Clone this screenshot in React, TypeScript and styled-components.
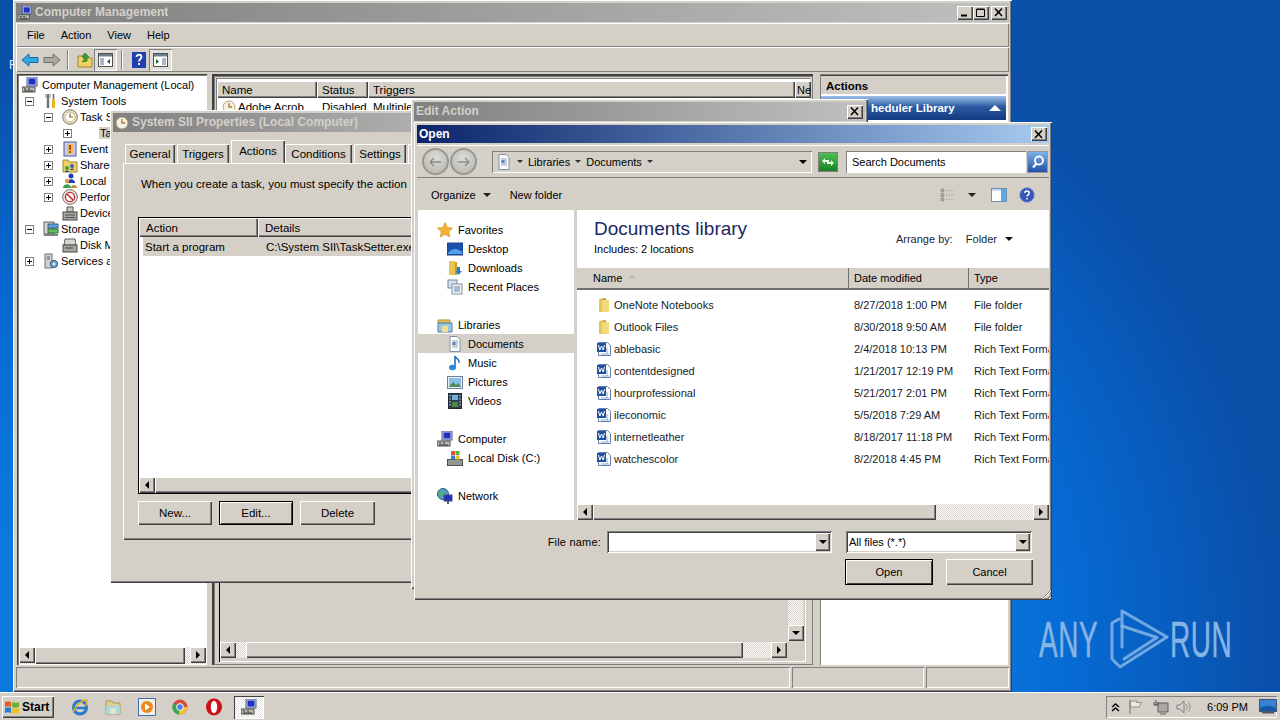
import React from "react";
import styled, { createGlobalStyle, css } from "styled-components";

const GlobalStyle = createGlobalStyle`
  html, body { margin: 0; padding: 0; width: 1280px; height: 720px; overflow: hidden; }
  * { box-sizing: border-box; }
  body { font-family: "Liberation Sans", Arial, sans-serif; font-size: 11.5px; color: #000; }
`;

const raised = css`
  background: #d4d0c8;
  box-shadow: inset 1px 1px 0 #fff, inset -1px -1px 0 #404040, inset -2px -2px 0 #808080;
`;
const sunken = css`
  box-shadow: inset 1px 1px 0 #808080, inset -1px -1px 0 #fff, inset 2px 2px 0 #404040, inset -2px -2px 0 #d4d0c8;
`;
const hatched = css`
  background: repeating-conic-gradient(#d4d0c8 0 25%, #fff 0 50%) 0 0 / 2px 2px;
`;

/* ---------- drawings ---------- */

const Svg = styled.svg`
  flex: none;
  display: block;
`;

type IconProps = { size?: number };

const icon = (paths: React.ReactNode) =>
  function Icon({ size = 16 }: IconProps) {
    return (
      <Svg width={size} height={size} viewBox="0 0 16 16">
        {paths}
      </Svg>
    );
  };

const ComputerIcon = icon(
  <>
    <rect x="5" y="0" width="10" height="9" fill="#c8d0e8" stroke="#4a5a9a" />
    <rect x="6.5" y="1.5" width="7" height="6" fill="#2030c0" />
    <rect x="0" y="10" width="13" height="5" fill="#b8b8b0" stroke="#505050" />
    <path d="M2 12h2M6 12h2M2 14h9" stroke="#303030" />
  </>
);
const ToolsIcon = icon(
  <>
    <path d="M5 1v14" stroke="#707070" strokeWidth="2.4" />
    <path d="M2.8 1v3l2.2 1.6L7.2 4V1" fill="none" stroke="#909090" />
    <path d="M10.5 6v9" stroke="#e8b820" strokeWidth="3" />
    <path d="M10.5 1v5" stroke="#707070" strokeWidth="1.6" />
  </>
);
const ClockIcon = icon(
  <>
    <circle cx="8" cy="8" r="7.3" fill="#e8e4d8" stroke="#807860" />
    <circle cx="8" cy="8" r="5" fill="#fff" stroke="#c8b878" />
    <path d="M8 4.5V8h3" fill="none" stroke="#806030" strokeWidth="1.2" />
  </>
);
const EventIcon = icon(
  <>
    <rect x="2" y="1" width="12" height="14" fill="#c8cce8" stroke="#505a90" />
    <rect x="5" y="3" width="6" height="10" fill="#e8c060" />
    <path d="M8 4v5" stroke="#c02020" strokeWidth="1.6" />
    <path d="M8 10v2" stroke="#c02020" strokeWidth="1.6" />
  </>
);
const ShareIcon = icon(
  <>
    <path d="M1 3h5l1 2h8v10H1z" fill="#f0d060" stroke="#a08830" />
    <circle cx="5" cy="11" r="2" fill="#40a040" />
    <circle cx="10" cy="9" r="2" fill="#3060c0" />
    <path d="M3 15c0-2 4-2 4 0zM8 13c0-2 4-2 4 0z" fill="#305090" />
  </>
);
const UsersIcon = icon(
  <>
    <circle cx="9" cy="3" r="2.5" fill="#2040b0" />
    <path d="M5 10c0-5 8-5 8 0z" fill="#2040b0" />
    <circle cx="5" cy="8" r="2.2" fill="#e0a040" />
    <path d="M1 15c0-5 8-5 8 0z" fill="#40a050" />
    <path d="M9 15c0-4 6-4 6 0z" fill="#c09030" />
  </>
);
const PerfIcon = icon(
  <>
    <circle cx="8" cy="8" r="7.3" fill="#f4f0e8" stroke="#706860" />
    <circle cx="8" cy="8" r="4.6" fill="#fff" stroke="#c03030" strokeWidth="1.4" />
    <path d="M5 5l6 6" stroke="#c03030" strokeWidth="1.6" />
  </>
);
const DeviceIcon = icon(
  <>
    <path d="M5 2h6v5H5z" fill="#c8c8c0" stroke="#505050" />
    <rect x="1" y="7" width="14" height="8" fill="#a8a8a0" stroke="#484848" />
    <path d="M3 10h10M3 12.500h10" stroke="#505050" />
  </>
);
const StorageIcon = icon(
  <>
    <rect x="1" y="1" width="10" height="12" fill="#d8d8d0" stroke="#606060" />
    <rect x="5" y="3" width="10" height="4" fill="#60a0d8" stroke="#306090" />
    <rect x="5" y="8" width="10" height="4" fill="#60c060" stroke="#307030" />
    <path d="M1 13h14v2H1z" fill="#808080" />
  </>
);
const DiskIcon = icon(
  <>
    <path d="M3 2h10l1 6H2z" fill="#d8d8d0" stroke="#606060" />
    <rect x="1" y="8" width="14" height="7" fill="#a8a8a0" stroke="#484848" />
    <path d="M3 11h8" stroke="#404040" />
  </>
);
const ServicesIcon = icon(
  <>
    <rect x="2" y="1" width="7" height="14" fill="#d0d0d0" stroke="#707070" />
    <path d="M4 4h3M4 6h3" stroke="#606060" />
    <circle cx="11" cy="11" r="3.6" fill="#70a8d8" stroke="#305880" />
    <circle cx="11" cy="11" r="1.2" fill="#fff" />
  </>
);
const SmallClock = icon(
  <>
    <circle cx="8" cy="8" r="6.800" fill="#f2f0e8" stroke="#a89a70" />
    <path d="M8 3.500V8h3.500" fill="none" stroke="#c07820" strokeWidth="1.500" />
  </>
);
const FolderIcon = icon(
  <>
    <path d="M3 2l7-1v14l-7 0z" fill="#c8a030" />
    <path d="M5 3h8v12H5z" fill="#f2da78" />
    <path d="M3 2h3v13H3z" fill="#e8c650" />
  </>
);
const WordDocIcon = icon(
  <>
    <path d="M2.500 1.500h9l3 3v10h-12z" fill="#fff" stroke="#6080b0" />
    <rect x="1" y="2" width="9" height="9" fill="#2050a0" />
    <path d="M2.500 4l1.300 5 1.700-4 1.700 4 1.300-5" fill="none" stroke="#fff" />
    <path d="M11 7v6M5 13h8" stroke="#90a8c8" />
  </>
);
const StarIcon = icon(
  <path d="M8 .5l2.300 5 5.200.6-3.800 3.600 1 5.300L8 12.300 3.300 15l1-5.300L.5 6.100l5.200-.6z" fill="#f4b030" stroke="#d08818" strokeWidth=".6" />
);
const DesktopIcon = icon(
  <>
    <rect x="0" y="2" width="16" height="12" fill="#1c50b0" stroke="#204080" />
    <path d="M1 12c4-5 9-5 14-1v2H1z" fill="#50a0e8" />
  </>
);
const DownloadsIcon = icon(
  <>
    <path d="M2 1h6v14H2z" fill="#e8c650" />
    <path d="M8 2h2v13H8z" fill="#c8a030" />
    <path d="M10 7h3v4h2l-3.500 4L8 11h2z" fill="#2080d8" />
  </>
);
const RecentIcon = icon(
  <>
    <rect x="1" y="1" width="9" height="8" fill="#d8e0e8" stroke="#7888a0" />
    <rect x="5" y="5" width="10" height="10" fill="#f0f0f0" stroke="#8090a0" />
    <path d="M7 8h6M7 10h6M7 12h6" stroke="#5888b8" />
  </>
);
const LibrariesIcon = icon(
  <>
    <path d="M1 3h12v3H1z" fill="#e8c860" stroke="#b09030" />
    <path d="M1 6h14v9H1z" fill="#98c8e0" stroke="#5080a0" />
    <rect x="5" y="9" width="6" height="6" fill="#f0e090" />
  </>
);
const DocPageIcon = icon(
  <>
    <path d="M3 .5h7l3 3v12H3z" fill="#fff" stroke="#8090a8" />
    <path d="M5 5h6M5 7h6M5 9h6M5 11h6" stroke="#90a0b8" />
    <rect x="5.500" y="6" width="3" height="3" fill="#6080c0" />
  </>
);
const MusicIcon = icon(
  <>
    <path d="M8 1v11" stroke="#2070c0" strokeWidth="1.600" />
    <path d="M8 1c1 3 5 3 4 7" fill="none" stroke="#2070c0" strokeWidth="1.400" />
    <ellipse cx="5.500" cy="12.500" rx="3.500" ry="2.800" fill="#2888d8" />
  </>
);
const PicturesIcon = icon(
  <>
    <rect x=".5" y="2.500" width="15" height="12" fill="#e8f0f8" stroke="#708098" />
    <rect x="2" y="4" width="12" height="9" fill="#88c0e8" />
    <path d="M2 13l4-5 3 3 2-2 3 4z" fill="#508850" />
  </>
);
const VideosIcon = icon(
  <>
    <rect x="1.500" y=".5" width="13" height="15" fill="#304050" stroke="#202830" />
    <rect x="5" y="2" width="6" height="5" fill="#70b0d8" />
    <rect x="5" y="9" width="6" height="5" fill="#508848" />
    <path d="M3 2v12M13 2v12" stroke="#d0d8e0" strokeDasharray="1.500 1.500" />
  </>
);
const LocalDiskIcon = icon(
  <>
    <rect x=".5" y="9.500" width="15" height="6" fill="#909890" stroke="#505050" />
    <rect x="4" y="1" width="4" height="4" fill="#e05030" />
    <rect x="8.500" y="1" width="4" height="4" fill="#60b040" />
    <rect x="4" y="5.500" width="4" height="4" fill="#3080d8" />
    <rect x="8.500" y="5.500" width="4" height="4" fill="#f0c030" />
  </>
);
const NetworkIcon = icon(
  <>
    <circle cx="6" cy="6" r="5.500" fill="#50a0c0" stroke="#306080" />
    <path d="M3 3c2 0 3 1 3 3S4 8 3 7zM8 2c1 2 2 2 2 4" fill="#60b060" />
    <rect x="7" y="7" width="8" height="6" fill="#2030c0" stroke="#404880" />
    <path d="M11 13v3" stroke="#505880" strokeWidth="2" />
  </>
);
const ArrowIcon = ({ color, edge, flip }: { color: string; edge: string; flip?: boolean }) => (
  <Svg width="18" height="16" viewBox="0 0 18 16" transform={flip ? "scale(-1 1)" : undefined}>
    <path d="M1 8l7-6v3.500h9v5H8V14z" fill={color} stroke={edge} />
  </Svg>
);
const UpFolderIcon = icon(
  <>
    <path d="M1 4h5l1 2h8v9H1z" fill="#f0d060" stroke="#a08830" />
    <path d="M8 1l4 4h-2v4l-5 1 2-2V5H5z" fill="#40a030" stroke="#206018" strokeWidth=".6" />
  </>
);
const PaneIcon = ({ right }: { right?: boolean }) => (
  <Svg width="15" height="14" viewBox="0 0 15 14">
    <rect x=".5" y=".5" width="14" height="13" fill="#fff" stroke="#505050" />
    <rect x="1" y="1" width="13" height="2.500" fill="#708090" />
    <rect x={right ? 9 : 2} y="5" width="4" height="7" fill="#a8b8c8" />
    <path d={right ? "M3 6l3 2.500L3 11z" : "M12 6L9 8.500l3 2.500z"} fill="#206040" />
  </Svg>
);
const HelpSquare = () => (
  <Svg width="14" height="16" viewBox="0 0 14 16">
    <rect width="14" height="16" fill="#2040b0" />
    <path d="M4.500 5c0-3 5-3 5 0 0 2-2.500 2-2.500 4.500M7 11v2" fill="none" stroke="#fff" strokeWidth="1.800" />
  </Svg>
);
const WinFlag = () => (
  <Svg width="17" height="16" viewBox="0 0 17 16">
    <path d="M1 3c2-1 4-1 6 0v5C5 7 3 7 1 8z" fill="#e85a28" />
    <path d="M8 3c2 1 4 1 7 0v5c-3 1-5 1-7 0z" fill="#70b030" />
    <path d="M1 9c2-1 4-1 6 0v5c-2-1-4-1-6 0z" fill="#2080d8" />
    <path d="M8 9c2 1 4 1 7 0v5c-3 1-5 1-7 0z" fill="#f0c028" />
  </Svg>
);
const IEIcon = () => (
  <Svg width="18" height="18" viewBox="0 0 18 18">
    <circle cx="9" cy="9.500" r="6.500" fill="none" stroke="#2878d0" strokeWidth="3" />
    <path d="M3 10h12" stroke="#2878d0" strokeWidth="2.400" />
    <path d="M2 15C4 8 10 2 16 2c1 3-2 6-3 6" fill="none" stroke="#e8b020" strokeWidth="1.400" />
  </Svg>
);
const ExplorerIcon = () => (
  <Svg width="18" height="18" viewBox="0 0 18 18">
    <path d="M2 3h6l1 2h7v11H2z" fill="#d8cf90" stroke="#a89858" />
    <path d="M2 8h14v8H2z" fill="#a8d8e8" />
    <rect x="6" y="10" width="6" height="6" fill="#e0e8c0" />
  </Svg>
);
const MediaIcon = () => (
  <Svg width="18" height="18" viewBox="0 0 18 18">
    <rect x=".5" y=".5" width="17" height="17" fill="#f0f0e8" stroke="#4070b0" />
    <circle cx="9" cy="9" r="6" fill="#e88820" />
    <path d="M7 5.500l5 3.500-5 3.500z" fill="#fff" />
  </Svg>
);
const ChromeIcon = () => (
  <Svg width="16" height="16" viewBox="0 0 16 16">
    <circle cx="8" cy="8" r="7.500" fill="#d94a38" />
    <path d="M8 8L1.500 4A7.500 7.500 0 0 0 7 15.500z" fill="#3aa757" />
    <path d="M8 8h7.300A7.500 7.500 0 0 1 7 15.500z" fill="#f4c430" />
    <circle cx="8" cy="8" r="3.400" fill="#4a80e8" stroke="#fff" />
  </Svg>
);
const OperaIcon = () => (
  <Svg width="18" height="18" viewBox="0 0 18 18">
    <ellipse cx="9" cy="9" rx="8" ry="8.500" fill="#cc0f16" />
    <ellipse cx="9" cy="9" rx="3.200" ry="6.200" fill="#fff" />
  </Svg>
);
const ChevronTray = () => (
  <Svg width="9" height="9" viewBox="0 0 9 9">
    <path d="M1 4l3.500-3L8 4M1 8l3.500-3L8 8" fill="none" stroke="#000" strokeWidth="1.400" />
  </Svg>
);
const FlagTray = () => (
  <Svg width="16" height="16" viewBox="0 0 16 16">
    <path d="M2 1v14" stroke="#707070" />
    <path d="M2.500 2h7l-1 1.500 5 0L11 8H2.500z" fill="#e8e8e0" stroke="#808080" strokeWidth=".8" />
  </Svg>
);
const NetTray = () => (
  <Svg width="16" height="16" viewBox="0 0 16 16">
    <rect x="5" y="4" width="10" height="9" fill="#a8a8a0" stroke="#606060" />
    <path d="M3 1v6M1 3v3h4V3" fill="none" stroke="#505050" />
    <path d="M7 15h6" stroke="#606060" />
  </Svg>
);
const SpeakerTray = () => (
  <Svg width="16" height="16" viewBox="0 0 16 16">
    <path d="M1 6h3l4-4v12l-4-4H1z" fill="#d0d0d0" stroke="#808080" />
    <path d="M10 5c1.500 2 1.500 4 0 6M12.500 3.500c2 3 2 6 0 9" fill="none" stroke="#909090" />
  </Svg>
);
const ShowDesktopIcon = () => (
  <Svg width="18" height="16" viewBox="0 0 18 16">
    <rect x=".5" y=".5" width="17" height="12" fill="#3880d0" stroke="#405878" />
    <path d="M1 9c5-3 11-3 16 0v3H1z" fill="#1858a8" />
    <path d="M3 13.500h12" stroke="#505868" strokeWidth="2" />
  </Svg>
);
const RefreshIcon = () => (
  <Svg width="14" height="14" viewBox="0 0 14 14">
    <path d="M1 6l3-3v2h4v2H4v2zM13 8l-3 3V9H6V7h4V5z" fill="#e8f8e8" />
  </Svg>
);
const SearchIcon = () => (
  <Svg width="14" height="14" viewBox="0 0 14 14">
    <circle cx="8" cy="5.500" r="4" fill="none" stroke="#fff" strokeWidth="1.800" />
    <path d="M5.500 8.500L2 12.500" stroke="#fff" strokeWidth="2.200" />
  </Svg>
);
const ViewsIcon = () => (
  <Svg width="14" height="14" viewBox="0 0 14 14">
    <path d="M1 1h3v3H1zM1 5.500h3v3H1zM1 10h3v3H1z" fill="#a8a8a0" stroke="#808078" strokeWidth=".5" />
    <path d="M6 2.500h8M6 7h8M6 11.500h8" stroke="#a8a8a0" strokeDasharray="1.500 1" />
  </Svg>
);
const PreviewIcon = () => (
  <Svg width="16" height="15" viewBox="0 0 16 15">
    <rect x=".5" y=".5" width="15" height="13" fill="#fff" stroke="#7090b0" />
    <rect x="10" y="1" width="5" height="12" fill="#60a8e0" />
    <rect x="1" y="1" width="9" height="2" fill="#c8d8e8" />
  </Svg>
);
const HelpRound = () => (
  <Svg width="16" height="16" viewBox="0 0 16 16">
    <circle cx="8" cy="8" r="7.500" fill="#3858b8" stroke="#a0b0d8" />
    <path d="M5.800 6c0-2.700 4.400-2.700 4.400 0 0 1.800-2.200 1.800-2.200 3.500M8 11v1.500" fill="none" stroke="#fff" strokeWidth="1.500" />
  </Svg>
);
const WatermarkLogo = () => (
  <Svg width="60" height="62" viewBox="0 0 60 62">
    <g fill="none" stroke="#86b4e4" strokeOpacity=".85" strokeWidth="3" strokeLinejoin="round" strokeLinecap="round">
      <path d="M9 10L2 14v36l8 8 47-30L12 2v36" />
      <path d="M12 17l35 11.500L14 50" />
    </g>
  </Svg>
);

/* ---------- desktop ---------- */

const Desktop = styled.div`
  position: relative;
  width: 1280px;
  height: 720px;
  overflow: hidden;
  background:
    radial-gradient(ellipse 800px 720px at 480px 640px, #1aa8f5 0%, #0b7fe0 55%, #0669d2 75%, #0a4fa8 100%),
    #0a4fa8;
`;

const ClippedLabel = styled.span`
  position: absolute;
  left: 9px;
  top: 58px;
  color: #dfeaf8;
  font-size: 12px;
`;

const WatermarkBox = styled.div`
  position: absolute;
  left: 1039px;
  top: 609px;
  display: flex;
  align-items: center;
  color: #86b4e4;
`;

const WatermarkWord = styled.span<{ $w: number }>`
  display: block;
  width: ${(p) => p.$w}px;
  font-size: 50px;
  line-height: 62px;
  transform: scaleX(0.56);
  transform-origin: left center;
  white-space: nowrap;
  letter-spacing: 1px;
  -webkit-text-stroke: 0.5px #86b4e4;
`;

/* ---------- windows ---------- */

const Win = styled.div<{ $x: number; $y: number; $w: number; $h: number; $z: number; $font?: number }>`
  position: absolute;
  left: ${(p) => p.$x}px;
  top: ${(p) => p.$y}px;
  width: ${(p) => p.$w}px;
  height: ${(p) => p.$h}px;
  z-index: ${(p) => p.$z};
  display: flex;
  flex-direction: column;
  overflow: hidden;
  padding: 3px;
  ${(p) => p.$font && `font-size: ${p.$font}px;`}
  ${raised}
`;

const TitleBar = styled.div<{ $active?: boolean; $h?: number }>`
  flex: none;
  height: ${(p) => p.$h ?? 19}px;
  display: flex;
  align-items: center;
  gap: 3px;
  padding: 0 2px;
  font-weight: 700;
  font-size: 12px;
  color: ${(p) => (p.$active ? "#fff" : "#d4d0c8")};
  background: ${(p) =>
    p.$active ? "linear-gradient(90deg, #0a246a 0%, #a6caf0 100%)" : "linear-gradient(90deg, #808080 0%, #c0c0c0 100%)"};
`;

const TitleText = styled.span`
  flex: 1;
  white-space: nowrap;
  overflow: hidden;
  line-height: 15px;
`;

const CaptionButtons = styled.div`
  display: flex;
  flex: none;
`;

const CaptionButton = styled.div<{ $gap?: number }>`
  ${raised}
  width: 16px;
  height: 14px;
  margin-left: ${(p) => p.$gap ?? 0}px;
  display: flex;
  align-items: center;
  justify-content: center;
`;

const CaptionGlyph = ({ kind }: { kind: "min" | "max" | "close" }) => (
  <Svg width="10" height="9" viewBox="0 0 10 9">
    {kind === "min" && <path d="M1 7.500h6" stroke="#000" strokeWidth="2" />}
    {kind === "max" && <path d="M.5 1.500h8v7h-8zM.5 1h8" fill="none" stroke="#000" />}
    {kind === "close" && <path d="M1 .5l7 7.500M8 .5L1 8" stroke="#000" strokeWidth="1.500" />}
  </Svg>
);

/* ---------- main window ---------- */

const MenuBar = styled.div`
  flex: none;
  height: 24px;
  margin-top: 1px;
  display: flex;
  align-items: center;
  padding-left: 11px;
  gap: 16px;
  font-size: 11px;
  box-shadow: inset 1px 1px 0 #fff, inset -1px -1px 0 #808080;
`;

const ToolBar = styled.div`
  flex: none;
  height: 25px;
  display: flex;
  align-items: center;
  padding-left: 3px;
  box-shadow: inset 1px 1px 0 #fff, inset -1px -1px 0 #808080;
`;

const ToolItem = styled.div<{ $pressed?: boolean; $w?: number }>`
  width: ${(p) => p.$w ?? 22}px;
  height: 22px;
  display: flex;
  align-items: center;
  justify-content: center;
  ${(p) =>
    p.$pressed &&
    css`
      box-shadow: inset 1px 1px 0 #808080, inset -1px -1px 0 #fff;
      background: repeating-conic-gradient(#d4d0c8 0 25%, #f0eee8 0 50%) 0 0 / 2px 2px;
    `}
`;

const ToolSep = styled.div`
  width: 2px;
  height: 20px;
  margin: 0 6px 0 4px;
  border-left: 1px solid #808080;
  border-right: 1px solid #fff;
`;

const Panes = styled.div`
  flex: 1;
  min-height: 0;
  margin-top: 2px;
  display: flex;
`;

const TreePane = styled.div`
  flex: none;
  width: 190px;
  margin-left: 1px;
  display: flex;
  flex-direction: column;
  background: #fff;
  font-size: 11px;
  box-shadow: inset 1px 1px 0 #404040, inset 2px 2px 0 #808080;
  padding: 2px 1px 1px 2px;
`;

const TreeList = styled.div`
  flex: 1;
  padding-top: 1px;
`;

const TreeRow = styled.div<{ $level: number; $root?: boolean }>`
  height: 16px;
  display: flex;
  align-items: center;
  gap: ${(p) => (p.$root ? 4 : 2)}px;
  padding-left: ${(p) => p.$level * 19 + 3}px;
  white-space: nowrap;
`;

const Expander = styled.span<{ $plus?: boolean }>`
  flex: none;
  width: 9px;
  height: 9px;
  margin: 0 7px 0 3px;
  border: 1px solid #808080;
  background: ${(p) =>
    p.$plus
      ? "linear-gradient(#000, #000) center / 5px 1px no-repeat, linear-gradient(#000, #000) center / 1px 5px no-repeat, #fff"
      : "linear-gradient(#000, #000) center / 5px 1px no-repeat, #fff"};
`;

const ExpanderGap = styled.span`
  flex: none;
  width: 19px;
`;

const BlankIcon = styled.span`
  flex: none;
  width: 16px;
`;

const TreeLabel = styled.span<{ $selected?: boolean }>`
  padding: 0 ${(p) => (p.$selected ? 1 : 0)}px;
  background: ${(p) => (p.$selected ? "#d4d0c8" : "transparent")};
`;

const Splitter = styled.div<{ $w: number }>`
  flex: none;
  width: ${(p) => p.$w}px;
`;

const CenterPane = styled.div`
  flex: 1;
  min-width: 0;
  display: flex;
  flex-direction: column;
  padding: 4px 3px 3px 4px;
  box-shadow: inset 2px 2px 0 #404040, inset 3px 3px 0 #808080, inset -1px -1px 0 #808080;
`;

const TaskList = styled.div`
  flex: none;
  height: 230px;
  background: #fff;
  box-shadow: inset 1px 1px 0 #808080;
  padding: 3px 0 0 1px;
`;

const ListHead = styled.div`
  display: flex;
  height: 17px;
`;

const HeadCell = styled.div<{ $w?: number }>`
  ${raised}
  ${(p) => (p.$w ? `flex: none; width: ${p.$w}px;` : "flex: 1;")}
  display: flex;
  align-items: center;
  padding-left: 5px;
  white-space: nowrap;
`;

const NarrowHead = styled(HeadCell)`
  padding-left: 2px;
  font-size: 11px;
`;

const TaskRow = styled.div`
  display: flex;
  align-items: center;
  height: 17px;
`;

const TaskCell = styled.div<{ $w: number }>`
  flex: none;
  width: ${(p) => p.$w}px;
  display: flex;
  align-items: center;
  gap: 2px;
  padding-left: 5px;
  white-space: nowrap;
`;

const DetailPane = styled.div`
  flex: 1;
  min-height: 0;
  margin: 6px 4px 0 3px;
  display: flex;
  flex-direction: column;
  box-shadow: inset 1px 1px 0 #000, inset -1px -1px 0 #fff;
  padding: 1px 3px 4px 1px;
`;

const DetailBody = styled.div`
  flex: 1;
  min-height: 0;
  display: flex;
  justify-content: flex-end;
  margin-bottom: 1px;
`;

const VScroll = styled.div`
  flex: none;
  width: 15px;
  display: flex;
  flex-direction: column;
  justify-content: flex-end;
  ${hatched}
`;

const ActionsPane = styled.div`
  flex: none;
  width: 188px;
  margin-right: 1px;
  display: flex;
  flex-direction: column;
  background: #fff;
  padding: 2px 2px 0 1px;
  box-shadow: inset 1px 1px 0 #808080, inset 0 2px 0 #404040;
`;

const ActionsHead = styled.div`
  flex: none;
  height: 19px;
  display: flex;
  align-items: center;
  padding-left: 5px;
  font-weight: 700;
  background: #d4d0c8;
  box-shadow: inset 0 -1px 0 #fff;
`;

const ActionsBand = styled.div`
  flex: none;
  height: 24px;
  margin-top: 1px;
  display: flex;
  align-items: center;
  justify-content: space-between;
  padding: 0 5px 0 50px;
  color: #fff;
  font-weight: 700;
  background: linear-gradient(180deg, #9dc0e8 0%, #2a5aa0 45%, #123a80 100%);
`;

const UpTriangle = styled.span`
  width: 0;
  height: 0;
  border-left: 6px solid transparent;
  border-right: 6px solid transparent;
  border-bottom: 6px solid #fff;
`;

const StatusBar = styled.div`
  flex: none;
  height: 21px;
  margin: 2px 0 1px;
  display: flex;
  gap: 2px;
`;

const StatusCell = styled.div<{ $w?: number }>`
  ${(p) => (p.$w ? `flex: none; width: ${p.$w}px;` : "flex: 1;")}
  box-shadow: inset 1px 1px 0 #808080, inset -1px -1px 0 #fff;
`;

/* ---------- scroll bars ---------- */

const ScrollRow = styled.div<{ $h?: number; $mr?: number }>`
  flex: none;
  height: ${(p) => p.$h ?? 16}px;
  margin-right: ${(p) => p.$mr ?? 0}px;
  display: flex;
  ${hatched}
`;

const ArrowBtn = styled.div`
  ${raised}
  flex: none;
  width: 16px;
  height: 16px;
  display: flex;
  align-items: center;
  justify-content: center;
`;

const Tri = styled.span<{ $dir: "left" | "right" | "down" }>`
  width: 0;
  height: 0;
  ${(p) =>
    p.$dir === "left" &&
    "border-top:4px solid transparent;border-bottom:4px solid transparent;border-right:4px solid #000;"}
  ${(p) =>
    p.$dir === "right" &&
    "border-top:4px solid transparent;border-bottom:4px solid transparent;border-left:4px solid #000;"}
  ${(p) =>
    p.$dir === "down" &&
    "border-left:4px solid transparent;border-right:4px solid transparent;border-top:4px solid #000;"}
`;

const Thumb = styled.div<{ $w?: number; $ml?: number }>`
  ${raised}
  ${(p) => (p.$w ? `flex: none; width: ${p.$w}px;` : "flex: 1;")}
  margin-left: ${(p) => p.$ml ?? 0}px;
`;

const Spacer = styled.div<{ $w?: number }>`
  ${(p) => (p.$w ? `flex: none; width: ${p.$w}px;` : "flex: 1;")}
`;

/* ---------- properties window ---------- */

const TabStrip = styled.div`
  flex: none;
  height: 25px;
  margin-top: 6px;
  padding-left: 12px;
  display: flex;
  align-items: flex-end;
  position: relative;
  z-index: 1;
`;

const Tab = styled.div<{ $active?: boolean; $w: number }>`
  flex: none;
  width: ${(p) => p.$w}px;
  height: ${(p) => (p.$active ? 23 : 19)}px;
  margin-right: ${(p) => (p.$active ? 0 : 2)}px;
  display: flex;
  align-items: center;
  justify-content: center;
  padding-bottom: ${(p) => (p.$active ? 2 : 0)}px;
  background: #d4d0c8;
  box-shadow: inset 1px 1px 0 #fff, inset -1px 0 0 #404040, inset -2px 0 0 #808080;
  white-space: nowrap;
`;

const TabPanel = styled.div`
  flex: none;
  width: 400px;
  height: 377px;
  margin-left: 10px;
  padding: 15px 0 0 15px;
  display: flex;
  flex-direction: column;
  box-shadow: inset 1px 1px 0 #fff, inset -1px -1px 0 #404040, inset 0 -2px 0 #808080;
`;

const PanelText = styled.div`
  height: 16px;
  padding-left: 3px;
  white-space: nowrap;
`;

const ActionTable = styled.div`
  flex: none;
  width: 380px;
  height: 277px;
  margin-top: 23px;
  display: flex;
  flex-direction: column;
  background: #fff;
  border: 1px solid #000;
  border-right: none;
`;

const ActionHead = styled.div`
  flex: none;
  height: 19px;
  display: flex;
`;

const ActionHeadCell = styled.div<{ $w: number }>`
  ${raised}
  flex: none;
  width: ${(p) => p.$w}px;
  display: flex;
  align-items: center;
  padding-left: 7px;
`;

const ActionRows = styled.div`
  flex: 1;
  padding: 0 0 0 4px;
`;

const ActionRow = styled.div`
  height: 19px;
  display: flex;
  align-items: center;
  background: #d4d0c8;
  white-space: nowrap;
`;

const ActionCell = styled.div<{ $w: number }>`
  flex: none;
  width: ${(p) => p.$w}px;
  padding-left: 2px;
`;

const PropButtons = styled.div`
  flex: none;
  margin-top: 7px;
  display: flex;
  gap: 7px;
`;

const Button = styled.div<{ $w: number; $h: number; $default?: boolean }>`
  ${raised}
  flex: none;
  width: ${(p) => p.$w}px;
  height: ${(p) => p.$h}px;
  display: flex;
  align-items: center;
  justify-content: center;
  ${(p) =>
    p.$default &&
    css`
      box-shadow: inset 0 0 0 1px #000, inset 2px 2px 0 #fff, inset -2px -2px 0 #404040;
    `}
`;

/* ---------- open dialog ---------- */

const NavBar = styled.div`
  flex: none;
  height: 33px;
  margin-top: 2px;
  display: flex;
  align-items: center;
  padding-left: 5px;
  box-shadow: inset 0 -1px 0 #808080, inset 0 1px 0 #fff;
`;

const RoundBtn = styled.div`
  flex: none;
  width: 27px;
  height: 27px;
  margin-right: 1px;
  border-radius: 50%;
  border: 2px solid #989890;
  background: radial-gradient(circle at 50% 35%, #dcdcd8, #b4b2ac);
  display: flex;
  align-items: center;
  justify-content: center;
`;

const RoundArrow = ({ flip }: { flip?: boolean }) => (
  <Svg width="13" height="10" viewBox="0 0 13 10" transform={flip ? "scale(-1 1)" : undefined}>
    <path d="M1 5l4-4M1 5l4 4M1 5h11" stroke="#8e8e88" strokeWidth="1.500" fill="none" />
  </Svg>
);

const Breadcrumb = styled.div`
  flex: none;
  width: 320px;
  height: 22px;
  margin-left: 14px;
  display: flex;
  align-items: center;
  padding-left: 4px;
  box-shadow: inset 1px 1px 0 #808080, inset -1px -1px 0 #fff;
`;

const Crumb = styled.span`
  display: flex;
  align-items: center;
  gap: 5px;
  margin-left: 5px;
  white-space: nowrap;
`;

const Caret = styled.span<{ $size?: number; $color?: string }>`
  flex: none;
  width: 0;
  height: 0;
  border-left: ${(p) => p.$size ?? 3}px solid transparent;
  border-right: ${(p) => p.$size ?? 3}px solid transparent;
  border-top: ${(p) => p.$size ?? 3}px solid ${(p) => p.$color ?? "#303030"};
`;

const RefreshBtn = styled.div`
  flex: none;
  width: 20px;
  height: 20px;
  margin-left: 6px;
  display: flex;
  align-items: center;
  justify-content: center;
  background: linear-gradient(180deg, #50c050, #188028);
  border: 1px solid #808078;
`;

const SearchBox = styled.div`
  flex: none;
  width: 180px;
  height: 22px;
  margin-left: 8px;
  display: flex;
  align-items: center;
  padding-left: 6px;
  background: #fff;
  box-shadow: inset 1px 1px 0 #808080;
`;

const SearchBtn = styled.div`
  flex: none;
  width: 21px;
  height: 22px;
  margin-left: 1px;
  display: flex;
  align-items: center;
  justify-content: center;
  background: linear-gradient(180deg, #80b0e8, #2050a8);
  border: 1px solid #9098a8;
`;

const CmdBar = styled.div`
  flex: none;
  height: 32px;
  display: flex;
  align-items: center;
  padding: 2px 7px 0 14px;
`;

const CmdLabel = styled.span<{ $ml?: number }>`
  display: flex;
  align-items: center;
  gap: 7px;
  margin-left: ${(p) => p.$ml ?? 0}px;
`;

const CmdIcons = styled.div`
  margin-left: auto;
  display: flex;
  align-items: center;
`;

const CmdIcon = styled.div<{ $w: number }>`
  flex: none;
  width: ${(p) => p.$w}px;
  display: flex;
  align-items: center;
  justify-content: center;
`;

const Browser = styled.div`
  flex: none;
  height: 310px;
  display: flex;
  margin-left: 1px;
`;

const NavPane = styled.div`
  flex: none;
  width: 156px;
  background: #fff;
  padding-top: 10px;
`;

const NavGroup = styled.div`
  margin-bottom: 19px;
`;

const NavItem = styled.div<{ $child?: boolean; $selected?: boolean }>`
  height: 19px;
  display: flex;
  align-items: center;
  gap: 5px;
  padding-left: ${(p) => (p.$child ? 29 : 19)}px;
  background: ${(p) => (p.$selected ? "#d4d0c8" : "transparent")};
  white-space: nowrap;
`;

const BrowserSplit = styled.div`
  flex: none;
  width: 3px;
  background: #d4d0c8;
`;

const FilePane = styled.div`
  flex: 1;
  min-width: 0;
  display: flex;
  flex-direction: column;
  background: #fff;
  overflow: hidden;
`;

const LibraryHead = styled.div`
  flex: none;
  height: 58px;
  display: flex;
  justify-content: space-between;
  padding: 8px 36px 0 17px;
`;

const LibraryTitle = styled.div`
  font-size: 19px;
  line-height: 22px;
  color: #202860;
`;

const LibrarySub = styled.div`
  margin-top: 2px;
  line-height: 15px;
`;

const ArrangeBy = styled.div`
  margin-top: 13px;
  display: flex;
  align-items: center;
  height: 15px;
  color: #202830;
`;

const ArrangeValue = styled.span`
  margin: 0 8px 0 13px;
`;

const ColumnHead = styled.div`
  flex: none;
  height: 22px;
  display: flex;
  background: #d4d0c8;
  box-shadow: inset 0 -2px 0 #707070;
`;

const ColumnCell = styled.div<{ $w: number }>`
  flex: none;
  width: ${(p) => p.$w}px;
  display: flex;
  align-items: center;
  gap: 7px;
  padding: 0 0 2px 5px;
  border-right: 1px solid #707070;
`;

const ColumnFirst = styled(ColumnCell)`
  padding-left: 16px;
`;

const ColumnLast = styled(ColumnCell)`
  border-right: none;
`;

const SortMark = styled.span`
  width: 0;
  height: 0;
  margin-top: -4px;
  border-left: 3px solid transparent;
  border-right: 3px solid transparent;
  border-bottom: 3px solid #b0b0a8;
`;

const FileList = styled.div`
  flex: 1;
  padding-top: 4px;
`;

const FileRow = styled.div`
  height: 22px;
  display: grid;
  grid-template-columns: 258px 120px 76px;
  align-items: center;
  padding-left: 19px;
  white-space: nowrap;
  color: #181c28;
`;

const FileName = styled.div`
  display: flex;
  align-items: center;
  gap: 2px;
`;

const Footer = styled.div`
  flex: 1;
  padding: 11px 17px 0 0;
  display: flex;
  flex-direction: column;
  align-items: flex-end;
`;

const FooterRow = styled.div`
  display: flex;
  align-items: center;
`;

const FooterLabel = styled.span`
  margin-right: 6px;
  letter-spacing: 0.2px;
`;

const Combo = styled.div<{ $w: number; $ml?: number }>`
  flex: none;
  width: ${(p) => p.$w}px;
  height: 22px;
  margin-left: ${(p) => p.$ml ?? 0}px;
  display: flex;
  align-items: center;
  padding: 2px;
  background: #fff;
  ${sunken}
`;

const ComboText = styled.span`
  flex: 1;
  padding-left: 1px;
`;

const ComboBtn = styled.div`
  ${raised}
  flex: none;
  width: 15px;
  height: 18px;
  display: flex;
  align-items: center;
  justify-content: center;
`;

const DialogButtons = styled.div`
  display: flex;
  gap: 13px;
  margin-top: 6px;
  margin-right: -1px;
`;

const ResizeGrip = styled.div`
  position: absolute;
  right: 1px;
  bottom: 1px;
  width: 12px;
  height: 12px;
  background: repeating-linear-gradient(135deg, transparent 0 2px, #808080 2px 3px, #fff 3px 4px);
  clip-path: polygon(100% 0, 100% 100%, 0 100%);
`;

/* ---------- taskbar ---------- */

const TaskBar = styled.div`
  position: absolute;
  left: 0;
  top: 692px;
  width: 1280px;
  height: 28px;
  z-index: 10;
  display: flex;
  align-items: center;
  padding: 2px 3px 0 2px;
  background: #d4d0c8;
  box-shadow: inset 0 1px 0 #fff;
`;

const StartButton = styled.div`
  ${raised}
  flex: none;
  width: 52px;
  height: 22px;
  display: flex;
  align-items: center;
  gap: 1px;
  padding-left: 2px;
  font-weight: 700;
  font-size: 12px;
`;

const QuickLaunch = styled.div`
  margin-left: 9px;
  display: flex;
  align-items: center;
`;

const QuickItem = styled.div`
  flex: none;
  width: 33.5px;
  display: flex;
  justify-content: center;
`;

const TaskButton = styled.div`
  flex: none;
  width: 30px;
  height: 23px;
  margin-left: 3px;
  display: flex;
  align-items: center;
  justify-content: center;
  box-shadow: inset 1px 1px 0 #404040, inset -1px -1px 0 #fff;
  background: repeating-conic-gradient(#fff 0 25%, #e8e6e0 0 50%) 0 0 / 2px 2px;
`;

const Tray = styled.div`
  margin-left: auto;
  flex: none;
  width: 171px;
  height: 22px;
  display: flex;
  align-items: center;
  padding-left: 1px;
  font-size: 11px;
  box-shadow: inset 1px 1px 0 #808080, inset -1px -1px 0 #fff;
`;

const TrayItem = styled.div<{ $w: number }>`
  flex: none;
  width: ${(p) => p.$w}px;
  display: flex;
  justify-content: center;
`;

const Clock = styled.span`
  flex: none;
  width: 63px;
  text-align: center;
`;

/* ---------- data ---------- */

type TreeItem = {
  level: number;
  exp?: "minus" | "plus";
  icon?: React.ReactNode;
  label: string;
  root?: boolean;
  selected?: boolean;
};

const treeItems: TreeItem[] = [
  { level: 0, root: true, icon: <ComputerIcon />, label: "Computer Management (Local)" },
  { level: 0, exp: "minus", icon: <ToolsIcon />, label: "System Tools" },
  { level: 1, exp: "minus", icon: <ClockIcon />, label: "Task S" },
  { level: 2, exp: "plus", label: "Ta", selected: true },
  { level: 1, exp: "plus", icon: <EventIcon />, label: "Event" },
  { level: 1, exp: "plus", icon: <ShareIcon />, label: "Shared" },
  { level: 1, exp: "plus", icon: <UsersIcon />, label: "Local U" },
  { level: 1, exp: "plus", icon: <PerfIcon />, label: "Perfor" },
  { level: 1, icon: <DeviceIcon />, label: "Device" },
  { level: 0, exp: "minus", icon: <StorageIcon />, label: "Storage" },
  { level: 1, icon: <DiskIcon />, label: "Disk M" },
  { level: 0, exp: "plus", icon: <ServicesIcon />, label: "Services a" },
];

const files = [
  { name: "OneNote Notebooks", date: "8/27/2018 1:00 PM", type: "File folder", folder: true },
  { name: "Outlook Files", date: "8/30/2018 9:50 AM", type: "File folder", folder: true },
  { name: "ablebasic", date: "2/4/2018 10:13 PM", type: "Rich Text Forma" },
  { name: "contentdesigned", date: "1/21/2017 12:19 PM", type: "Rich Text Forma" },
  { name: "hourprofessional", date: "5/21/2017 2:01 PM", type: "Rich Text Forma" },
  { name: "ileconomic", date: "5/5/2018 7:29 AM", type: "Rich Text Forma" },
  { name: "internetleather", date: "8/18/2017 11:18 PM", type: "Rich Text Forma" },
  { name: "watchescolor", date: "8/2/2018 4:45 PM", type: "Rich Text Forma" },
];

const navGroups = [
  [
    { label: "Favorites", icon: <StarIcon /> },
    { label: "Desktop", icon: <DesktopIcon />, child: true },
    { label: "Downloads", icon: <DownloadsIcon />, child: true },
    { label: "Recent Places", icon: <RecentIcon />, child: true },
  ],
  [
    { label: "Libraries", icon: <LibrariesIcon /> },
    { label: "Documents", icon: <DocPageIcon />, child: true, selected: true },
    { label: "Music", icon: <MusicIcon />, child: true },
    { label: "Pictures", icon: <PicturesIcon />, child: true },
    { label: "Videos", icon: <VideosIcon />, child: true },
  ],
  [
    { label: "Computer", icon: <ComputerIcon /> },
    { label: "Local Disk (C:)", icon: <LocalDiskIcon />, child: true },
  ],
  [{ label: "Network", icon: <NetworkIcon /> }],
];

function MainWindow() {
  return (
    <Win $x={13} $y={0} $w={999} $h={692} $z={1}>
      <TitleBar>
        <ComputerIcon size={14} />
        <TitleText>Computer Management</TitleText>
        <CaptionButtons>
          <CaptionButton><CaptionGlyph kind="min" /></CaptionButton>
          <CaptionButton><CaptionGlyph kind="max" /></CaptionButton>
          <CaptionButton $gap={2}><CaptionGlyph kind="close" /></CaptionButton>
        </CaptionButtons>
      </TitleBar>
      <MenuBar>
        <span>File</span>
        <span>Action</span>
        <span>View</span>
        <span>Help</span>
      </MenuBar>
      <ToolBar>
        <ToolItem><ArrowIcon color="#30a8e0" edge="#1868a8" /></ToolItem>
        <ToolItem><ArrowIcon color="#a8a8a0" edge="#707068" flip /></ToolItem>
        <ToolSep />
        <ToolItem $w={19}><UpFolderIcon /></ToolItem>
        <ToolItem $pressed $w={23}><PaneIcon /></ToolItem>
        <ToolSep />
        <ToolItem $w={20}><HelpSquare /></ToolItem>
        <ToolItem $pressed $w={23}><PaneIcon right /></ToolItem>
      </ToolBar>
      <Panes>
        <TreePane>
          <TreeList>
            {treeItems.map((t) => (
              <TreeRow key={t.label} $level={t.level} $root={t.root}>
                {t.exp && <Expander $plus={t.exp === "plus"} />}
                {!t.exp && !t.root && <ExpanderGap />}
                {t.icon ?? <BlankIcon />}
                <TreeLabel $selected={t.selected}>{t.label}</TreeLabel>
              </TreeRow>
            ))}
          </TreeList>
          <ScrollRow $h={17}>
            <ArrowBtn><Tri $dir="left" /></ArrowBtn>
            <Thumb $w={150} />
            <Spacer />
            <ArrowBtn><Tri $dir="right" /></ArrowBtn>
          </ScrollRow>
        </TreePane>
        <Splitter $w={5} />
        <CenterPane>
          <TaskList>
            <ListHead>
              <HeadCell $w={100}>Name</HeadCell>
              <HeadCell $w={51}>Status</HeadCell>
              <HeadCell $w={427}>Triggers</HeadCell>
              <NarrowHead>Ne</NarrowHead>
            </ListHead>
            <TaskRow>
              <TaskCell $w={100}><SmallClock size={14} />Adobe Acrob</TaskCell>
              <TaskCell $w={51}>Disabled</TaskCell>
              <TaskCell $w={100}>Multiple</TaskCell>
            </TaskRow>
          </TaskList>
          <DetailPane>
            <DetailBody>
              <VScroll>
                <ArrowBtn><Tri $dir="down" /></ArrowBtn>
              </VScroll>
            </DetailBody>
            <ScrollRow $mr={16}>
              <ArrowBtn><Tri $dir="left" /></ArrowBtn>
              <Thumb $ml={10} $w={497} />
              <Spacer />
              <ArrowBtn><Tri $dir="right" /></ArrowBtn>
            </ScrollRow>
          </DetailPane>
        </CenterPane>
        <Splitter $w={7} />
        <ActionsPane>
          <ActionsHead>Actions</ActionsHead>
          <ActionsBand>
            <span>heduler Library</span>
            <UpTriangle />
          </ActionsBand>
        </ActionsPane>
      </Panes>
      <StatusBar>
        <StatusCell />
        <StatusCell $w={132} />
        <StatusCell $w={83} />
      </StatusBar>
    </Win>
  );
}

function PropertiesWindow() {
  return (
    <Win $x={110} $y={110} $w={420} $h={473} $z={2}>
      <TitleBar>
        <SmallClock size={14} />
        <TitleText>System SII Properties (Local Computer)</TitleText>
      </TitleBar>
      <TabStrip>
        <Tab $w={50}>General</Tab>
        <Tab $w={52}>Triggers</Tab>
        <Tab $w={54} $active>Actions</Tab>
        <Tab $w={67}>Conditions</Tab>
        <Tab $w={52}>Settings</Tab>
        <Tab $w={50} />
      </TabStrip>
      <TabPanel>
        <PanelText>When you create a task, you must specify the action</PanelText>
        <ActionTable>
          <ActionHead>
            <ActionHeadCell $w={119}>Action</ActionHeadCell>
            <ActionHeadCell $w={260}>Details</ActionHeadCell>
          </ActionHead>
          <ActionRows>
            <ActionRow>
              <ActionCell $w={121}>Start a program</ActionCell>
              <ActionCell $w={260}>C:\System SII\TaskSetter.exe</ActionCell>
            </ActionRow>
          </ActionRows>
          <ScrollRow>
            <ArrowBtn><Tri $dir="left" /></ArrowBtn>
            <Thumb />
          </ScrollRow>
        </ActionTable>
        <PropButtons>
          <Button $w={74} $h={24}>New...</Button>
          <Button $w={74} $h={24} $default>Edit...</Button>
          <Button $w={75} $h={24}>Delete</Button>
        </PropButtons>
      </TabPanel>
    </Win>
  );
}

function EditActionWindow() {
  return (
    <Win $x={411} $y={99} $w={457} $h={490} $z={3}>
      <TitleBar>
        <TitleText>Edit Action</TitleText>
        <CaptionButton><CaptionGlyph kind="close" /></CaptionButton>
      </TitleBar>
    </Win>
  );
}

function OpenDialog() {
  return (
    <Win $x={414} $y={122} $w={638} $h={478} $z={4} $font={11}>
      <TitleBar $active $h={18}>
        <TitleText>Open</TitleText>
        <CaptionButton><CaptionGlyph kind="close" /></CaptionButton>
      </TitleBar>
      <NavBar>
        <RoundBtn><RoundArrow /></RoundBtn>
        <RoundBtn><RoundArrow flip /></RoundBtn>
        <Breadcrumb>
          <DocPageIcon />
          <Crumb><Caret />Libraries</Crumb>
          <Crumb><Caret />Documents</Crumb>
          <Crumb><Caret /></Crumb>
          <Spacer />
          <Caret $size={4} $color="#000" />
          <Spacer $w={5} />
        </Breadcrumb>
        <RefreshBtn><RefreshIcon /></RefreshBtn>
        <SearchBox>Search Documents</SearchBox>
        <SearchBtn><SearchIcon /></SearchBtn>
      </NavBar>
      <CmdBar>
        <CmdLabel>Organize <Caret $size={4} $color="#202020" /></CmdLabel>
        <CmdLabel $ml={19}>New folder</CmdLabel>
        <CmdIcons>
          <CmdIcon $w={22}><ViewsIcon /></CmdIcon>
          <CmdIcon $w={28}><Caret $size={4} $color="#202020" /></CmdIcon>
          <CmdIcon $w={26}><PreviewIcon /></CmdIcon>
          <CmdIcon $w={30}><HelpRound /></CmdIcon>
        </CmdIcons>
      </CmdBar>
      <Browser>
        <NavPane>
          {navGroups.map((group) => (
            <NavGroup key={group[0].label}>
              {group.map((item) => (
                <NavItem key={item.label} $child={"child" in item} $selected={"selected" in item}>
                  {item.icon}
                  <span>{item.label}</span>
                </NavItem>
              ))}
            </NavGroup>
          ))}
        </NavPane>
        <BrowserSplit />
        <FilePane>
          <LibraryHead>
            <div>
              <LibraryTitle>Documents library</LibraryTitle>
              <LibrarySub>Includes: 2 locations</LibrarySub>
            </div>
            <ArrangeBy>
              Arrange by:
              <ArrangeValue>Folder</ArrangeValue>
              <Caret $size={4} $color="#101010" />
            </ArrangeBy>
          </LibraryHead>
          <ColumnHead>
            <ColumnFirst $w={272}>Name <SortMark /></ColumnFirst>
            <ColumnCell $w={120}>Date modified</ColumnCell>
            <ColumnLast $w={80}>Type</ColumnLast>
          </ColumnHead>
          <FileList>
            {files.map((f) => (
              <FileRow key={f.name}>
                <FileName>
                  {f.folder ? <FolderIcon /> : <WordDocIcon />}
                  {f.name}
                </FileName>
                <span>{f.date}</span>
                <span>{f.type}</span>
              </FileRow>
            ))}
          </FileList>
          <ScrollRow>
            <ArrowBtn><Tri $dir="left" /></ArrowBtn>
            <Thumb $w={343} />
            <Spacer />
            <ArrowBtn><Tri $dir="right" /></ArrowBtn>
          </ScrollRow>
        </FilePane>
      </Browser>
      <Footer>
        <FooterRow>
          <FooterLabel>File name:</FooterLabel>
          <Combo $w={225}>
            <ComboText />
            <ComboBtn><Tri $dir="down" /></ComboBtn>
          </Combo>
          <Combo $w={186} $ml={14}>
            <ComboText>All files (*.*)</ComboText>
            <ComboBtn><Tri $dir="down" /></ComboBtn>
          </Combo>
        </FooterRow>
        <DialogButtons>
          <Button $w={88} $h={26} $default>Open</Button>
          <Button $w={87} $h={26}>Cancel</Button>
        </DialogButtons>
      </Footer>
      <ResizeGrip />
    </Win>
  );
}

export default function App() {
  return (
    <Desktop>
      <GlobalStyle />
      <ClippedLabel>R</ClippedLabel>
      <WatermarkBox>
        <WatermarkWord $w={71}>ANY</WatermarkWord>
        <WatermarkLogo />
        <WatermarkWord $w={60}>RUN</WatermarkWord>
      </WatermarkBox>
      <MainWindow />
      <PropertiesWindow />
      <EditActionWindow />
      <OpenDialog />
      <TaskBar>
        <StartButton><WinFlag />Start</StartButton>
        <QuickLaunch>
          <QuickItem><IEIcon /></QuickItem>
          <QuickItem><ExplorerIcon /></QuickItem>
          <QuickItem><MediaIcon /></QuickItem>
          <QuickItem><ChromeIcon /></QuickItem>
          <QuickItem><OperaIcon /></QuickItem>
        </QuickLaunch>
        <TaskButton><ComputerIcon /></TaskButton>
        <Tray>
          <TrayItem $w={16}><ChevronTray /></TrayItem>
          <TrayItem $w={26}><FlagTray /></TrayItem>
          <TrayItem $w={23}><NetTray /></TrayItem>
          <TrayItem $w={24}><SpeakerTray /></TrayItem>
          <Clock>6:09 PM</Clock>
          <ShowDesktopIcon />
        </Tray>
      </TaskBar>
    </Desktop>
  );
}
